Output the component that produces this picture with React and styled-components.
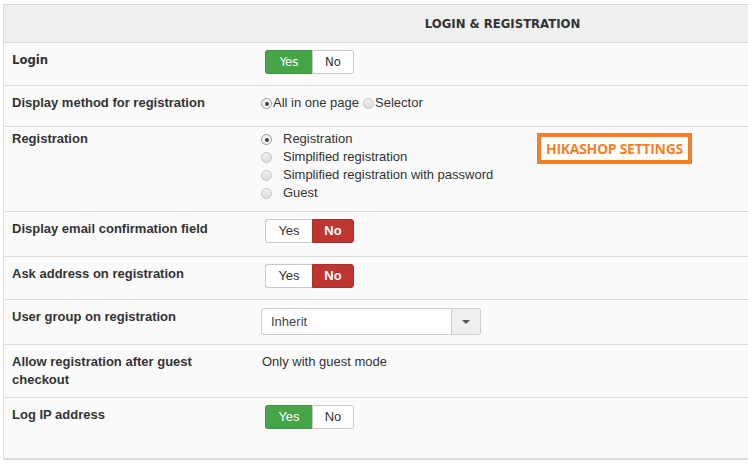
import styled, { createGlobalStyle, css } from 'styled-components';

const GlobalStyle = createGlobalStyle`
    html, body {
        margin: 0;
        padding: 0;
        background: #fff;
        overflow: hidden;
    }
    body {
        font-family: "Liberation Sans", Arial, sans-serif;
        font-size: 13px;
        color: #333;
    }
`;

const narrow = css`
    font-family: "DejaVu Sans Condensed", "Liberation Sans Narrow", "Roboto", sans-serif;
`;

const rows = [
    { label: 'Login', type: 'toggle', value: true, h: 43, narrow: true },
    { label: 'Display method for registration', type: 'inline', h: 41 },
    { label: 'Registration', type: 'list', h: 85, top: 3 },
    { label: 'Display email confirmation field', type: 'toggle', value: false, h: 45 },
    { label: 'Ask address on registration', type: 'toggle', value: false, h: 43 },
    { label: 'User group on registration', type: 'select', h: 45 },
    { label: 'Allow registration after guest checkout', type: 'text', h: 53 },
    { label: 'Log IP address', type: 'toggle', value: true, h: 61 },
];

function Toggle({ on, narrow }) {
    return (
        <BtnGroup $narrow={narrow}>
            <Btn $active={on} $tone="yes">Yes</Btn>
            <Btn $active={!on} $tone="no">No</Btn>
        </BtnGroup>
    );
}

function Radio({ checked, children, $gap }) {
    return (
        <RadioLabel $gap={$gap}>
            <Dot $checked={checked} />
            {children}
        </RadioLabel>
    );
}

function Value({ row }) {
    switch (row.type) {
        case 'toggle':
            return <Toggle on={row.value} narrow={row.narrow} />;
        case 'inline':
            return (
                <Inline>
                    <Radio checked>All in one page</Radio>
                    <Radio>Selector</Radio>
                </Inline>
            );
        case 'list':
            return (
                <List>
                    <Radio checked $gap={11}>Registration</Radio>
                    <Radio $gap={11}>Simplified registration</Radio>
                    <Radio $gap={11}>Simplified registration with password</Radio>
                    <Radio $gap={11}>Guest</Radio>
                </List>
            );
        case 'select':
            return (
                <Select>
                    <SelectText>Inherit</SelectText>
                    <Caret />
                </Select>
            );
        default:
            return <Plain>Only with guest mode</Plain>;
    }
}

export default function App() {
    return (
        <>
            <GlobalStyle />
            <Page>
                <Table>
                    <Header>
                        <div />
                        <Title>LOGIN &amp; REGISTRATION</Title>
                    </Header>
                    {rows.map((row) => (
                        <Row key={row.label} $h={row.h}>
                            <Label $narrow={row.narrow} $top={row.top}>{row.label}</Label>
                            <Cell $type={row.type}>
                                <Value row={row} />
                            </Cell>
                        </Row>
                    ))}
                    <Badge>HIKASHOP SETTINGS</Badge>
                </Table>
            </Page>
        </>
    );
}

const Page = styled.div`
    padding: 4px 0 0 3px;
    width: 760px;
`;

const Table = styled.div`
    position: relative;
    width: 750px;
    border: 1px solid #dcdcdc;
    border-right: none;
    background: #fafafa;
`;

const Header = styled.div`
    display: grid;
    grid-template-columns: 251px 1fr;
    height: 37px;
    align-items: center;
    background: #efefef;
    border-bottom: 1px solid #dcdcdc;
`;

const Title = styled.div`
    ${narrow};
    text-align: center;
    font-size: 13px;
    font-weight: bold;
    color: #333;
    padding-right: 4px;
`;

const Row = styled.div`
    display: grid;
    grid-template-columns: 251px 1fr;
    min-height: ${(p) => p.$h}px;
    box-sizing: border-box;
    border-bottom: 1px solid #dcdcdc;
    &:last-of-type {
        border-bottom: none;
    }
`;

const Label = styled.div`
    padding: ${(p) => (p.$top ?? 8)}px 40px 0 8px;
    font-weight: bold;
    line-height: 18px;
    color: #333;
    ${(p) => p.$narrow && css`
        ${narrow};
        font-size: 13px;
        font-weight: bold;
    `}
`;

const Cell = styled.div`
    padding-top: ${(p) => ({ toggle: 7, inline: 8, list: 3, select: 8, text: 8 }[p.$type])}px;
    padding-left: ${(p) => (p.$type === 'toggle' ? 10 : 6)}px;
    line-height: 18px;
`;

const BtnGroup = styled.div`
    display: inline-flex;
    height: 24px;
    ${(p) => p.$narrow && css`
        ${narrow};
        font-size: 13px;
    `}
`;

const Btn = styled.span`
    display: flex;
    align-items: center;
    justify-content: center;
    width: ${(p) => (p.$tone === 'yes' ? 47 : 42)}px;
    box-sizing: border-box;
    border: 1px solid #c8c8c8;
    background: #fff;
    color: #333;
    &:first-child {
        border-radius: 3px 0 0 3px;
        border-right: none;
    }
    &:last-child {
        border-radius: 0 3px 3px 0;
    }
    ${(p) => p.$active && p.$tone === 'yes' && css`
        background: #46a546;
        border-color: #3f943f;
        color: #fff;
    `}
    ${(p) => p.$active && p.$tone === 'no' && css`
        background: #bd362f;
        border-color: #a9302a;
        color: #fff;
        font-weight: bold;
    `}
`;

const Inline = styled.div`
    display: flex;
    gap: 4px;
`;

const List = styled.div`
    display: flex;
    flex-direction: column;
`;

const RadioLabel = styled.label`
    display: flex;
    align-items: center;
    gap: ${(p) => p.$gap ?? 1}px;
    line-height: 18px;
    color: #333;
`;

const Dot = styled.span`
    position: relative;
    width: 11px;
    height: 11px;
    border-radius: 50%;
    box-sizing: border-box;
    border: 1px solid #c4c4c4;
    background: linear-gradient(#f2f2f2, #dcdcdc);
    margin-top: 1px;
    ${(p) => p.$checked && css`
        border-color: #9a9a9a;
        background: #f4f4f4;
        &::after {
            content: '';
            position: absolute;
            left: 2.5px;
            top: 2.5px;
            width: 4px;
            height: 4px;
            border-radius: 50%;
            background: #444;
        }
    `}
`;

const Select = styled.div`
    display: flex;
    align-items: center;
    justify-content: space-between;
    width: 220px;
    height: 27px;
    box-sizing: border-box;
    border: 1px solid #ccc;
    border-radius: 3px;
    background: #fff;
    color: #444;
    overflow: hidden;
`;

const SelectText = styled.span`
    padding-left: 9px;
`;

const Caret = styled.span`
    align-self: stretch;
    width: 28px;
    border-left: 1px solid #ccc;
    background: #eee;
    position: relative;
    &::after {
        content: '';
        position: absolute;
        left: 10px;
        top: 11px;
        border-left: 4px solid transparent;
        border-right: 4px solid transparent;
        border-top: 4px solid #555;
    }
`;

const Plain = styled.div`
    padding-left: 1px;
    color: #333;
`;

const Badge = styled.div`
    position: absolute;
    left: 533px;
    top: 128px;
    width: 155px;
    height: 31px;
    box-sizing: border-box;
    border: 4px solid #f47f2a;
    background: #fff;
    display: flex;
    align-items: center;
    justify-content: center;
    font-family: "Open Sans", sans-serif;
    font-weight: bold;
    font-size: 14px;
    color: #f47f2a;
    letter-spacing: -0.3px;
`;
